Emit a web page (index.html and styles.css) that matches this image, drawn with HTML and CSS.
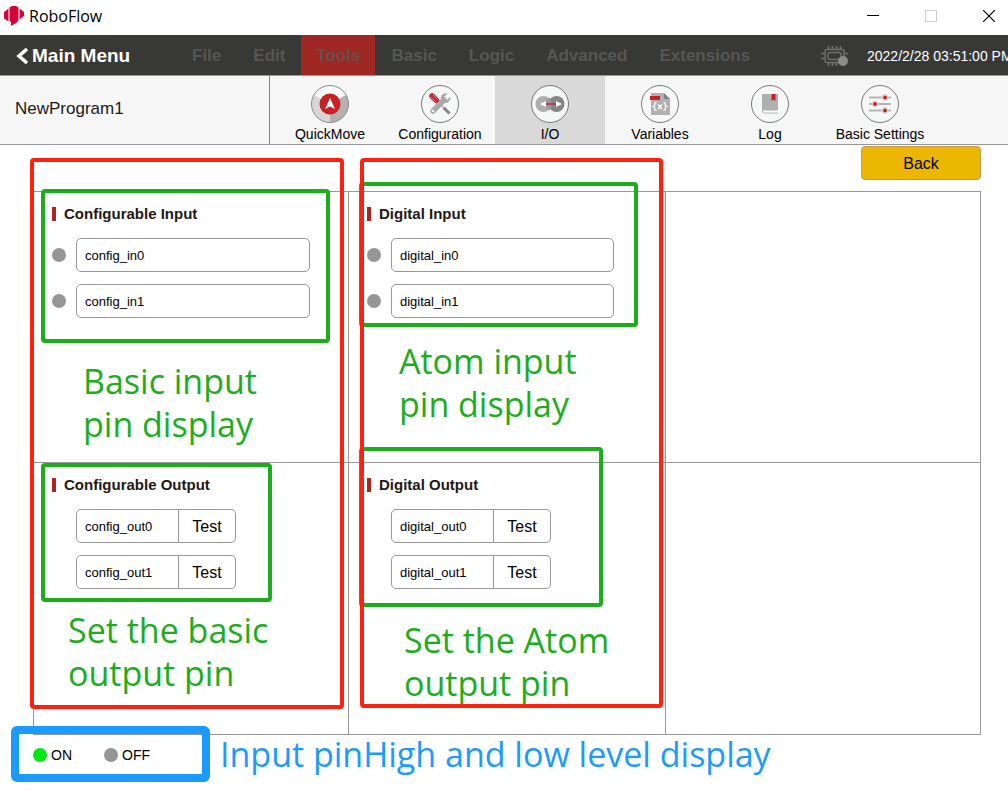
FILE: index.html
```html
<!DOCTYPE html>
<html lang="en">
<head>
<meta charset="utf-8">
<title>RoboFlow</title>
<link rel="stylesheet" href="styles.css">
</head>
<body>
<div class="app">
  <header class="titlebar">
    <svg class="logo" width="20" height="20" viewBox="0 0 20 20" fill="#d0063a">
      <path d="M0 6 L4.500 2.500 V15.500 L0 12.500Z"/>
      <path d="M5.500 1.500 L8 0 H12 L14.500 1.500 V14.500 L12 17 L7 20 V16 L5.500 14.500Z"/>
      <path d="M15.500 2.500 L20 6 V10 L15.500 13.500Z"/>
    </svg>
    <span class="app-name">RoboFlow</span>
    <div class="window-controls">
      <button class="win-btn" aria-label="Minimize"><svg width="12" height="12" viewBox="0 0 12 12"><path d="M0 5.500H12" stroke="#000"/></svg></button>
      <button class="win-btn" aria-label="Maximize" disabled><svg width="12" height="12" viewBox="0 0 12 12"><rect x=".5" y=".5" width="11" height="11" fill="none" stroke="#ccc"/></svg></button>
      <button class="win-btn" aria-label="Close"><svg width="12" height="12" viewBox="0 0 12 12"><path d="M0 0L12 12M12 0L0 12" stroke="#000" stroke-width="1.200"/></svg></button>
    </div>
  </header>

  <nav class="menubar">
    <button class="main-menu">
      <svg width="13" height="16" viewBox="0 0 13 16"><path d="M11 1L3 8L11 15" fill="none" stroke="#fff" stroke-width="3.500"/></svg>
      <span>Main Menu</span>
    </button>
    <div class="menus">
      <button class="menu" disabled>File</button>
      <button class="menu" disabled>Edit</button>
      <button class="menu active" disabled>Tools</button>
      <button class="menu" disabled>Basic</button>
      <button class="menu" disabled>Logic</button>
      <button class="menu" disabled>Advanced</button>
      <button class="menu" disabled>Extensions</button>
    </div>
    <div class="status">
      <svg width="28" height="20" viewBox="0 0 28 20" fill="none" stroke="#6e6e6c">
        <rect x="4" y="3.500" width="19" height="13" rx="2" stroke-width="1.500"/>
        <rect x="7" y="6.500" width="13" height="7" rx="2" stroke-width="1.500"/>
        <path d="M7.500 0V3M11.500 0V3M15.500 0V3M19.500 0V3M7.500 17V20M11.500 17V20M15.500 17V20M0 7.500H3.500M0 12.500H3.500M23.500 7.500H27" stroke-width="1.700"/>
        <circle cx="22" cy="15" r="5" fill="#8b8b89" stroke="none"/>
      </svg>
      <time>2022/2/28 03:51:00 PM</time>
    </div>
  </nav>

  <div class="toolbar">
    <div class="program">NewProgram1</div>
    <div class="tools">
      <button class="tool">
        <svg width="38" height="38" viewBox="0 0 38 38">
          <circle cx="19" cy="19" r="18.500" fill="#f6f8f7"/>
          <path d="M19 19L3 10A18.500 18.500 0 0 0 19 37.500Z" fill="#d7d7d7"/>
          <path d="M19 19L35 10A18.500 18.500 0 0 1 19 37.500Z" fill="#b2b2b2"/>
          <circle cx="19" cy="19" r="18.500" fill="none" stroke="#888"/>
          <circle cx="19" cy="19" r="10.500" fill="#c92024"/>
          <path d="M19 13L24 24L19 21.500L14 24Z" fill="#fff"/>
        </svg>
        <span>QuickMove</span>
      </button>
      <button class="tool">
        <svg width="38" height="38" viewBox="0 0 38 38">
          <circle cx="19" cy="19" r="18.500" fill="#f6f8f7" stroke="#777"/>
          <path d="M11 11L15.500 15.500" stroke="#c92432" stroke-width="5.500" stroke-linecap="round"/>
          <path d="M10 12L14.500 16.500M12 10L16.500 14.500" stroke="#e6a4a8" stroke-width=".7"/>
          <path d="M17 17L22 22" stroke="#aaa" stroke-width="1.500"/>
          <path d="M22.500 22.500L28.500 28.500" stroke="#858585" stroke-width="3"/>
          <path d="M12 26L23 15" stroke="#aaa" stroke-width="5.500" stroke-linecap="round"/>
          <path d="M26.500 8.500C21 7.500 18.500 12 20.500 16C23.500 20 30 18 29.500 11.500L26 15L23 12Z" fill="#aaa"/>
          <circle cx="12" cy="26" r="1.300" fill="#f6f8f7"/>
        </svg>
        <span>Configuration</span>
      </button>
      <button class="tool selected">
        <svg width="38" height="38" viewBox="0 0 38 38">
          <circle cx="19" cy="19" r="18.500" fill="#f6f8f7" stroke="#777"/>
          <circle cx="25.500" cy="19" r="8" fill="#858585"/>
          <circle cx="12.500" cy="19" r="8" fill="#aeaeae"/>
          <path d="M18 12.500A8 8 0 0 1 20.500 19A8 8 0 0 1 18 25.500A8 8 0 0 1 18 12.500" fill="#989898"/>
          <path d="M14 19H25" stroke="#b64050" stroke-width="2"/>
          <path d="M9 19L15 16V22ZM31 19L25 16V22Z" fill="#fff"/>
        </svg>
        <span>I/O</span>
      </button>
      <button class="tool">
        <svg width="38" height="38" viewBox="0 0 38 38">
          <circle cx="19" cy="19" r="18.500" fill="#f6f8f7" stroke="#777"/>
          <path d="M10 8H23L29 14V30H10Z" fill="#b0b0b0"/>
          <path d="M23 8L29 14H23Z" fill="#858585"/>
          <rect x="9" y="11" width="10" height="4" fill="#c92024"/>
          <path d="M15.500 17.500C12 17.500 15.500 20.500 12.500 21.500C15.500 22.500 12 25.500 15.500 25.500M22.500 17.500C26 17.500 22.500 20.500 25.500 21.500C22.500 22.500 26 25.500 22.500 25.500M17 19.500L21 24M21 19.500L17 24" fill="none" stroke="#fff" stroke-width="1.300"/>
        </svg>
        <span>Variables</span>
      </button>
      <button class="tool">
        <svg width="38" height="38" viewBox="0 0 38 38">
          <circle cx="19" cy="19" r="18.500" fill="#f6f8f7" stroke="#777"/>
          <path d="M11 9H27V25H11Z" fill="#b0b0b0"/>
          <path d="M11 24.500H27V28.500H13Q11 28.500 11 26.500Z" fill="#b0b0b0"/>
          <rect x="12" y="25.500" width="15" height="2" fill="#fff"/>
          <path d="M20.500 9H24.500V16L22.500 14.500L20.500 16Z" fill="#c92024"/>
        </svg>
        <span>Log</span>
      </button>
      <button class="tool">
        <svg width="38" height="38" viewBox="0 0 38 38">
          <circle cx="19" cy="19" r="18.500" fill="#f6f8f7" stroke="#777"/>
          <path d="M8 12.500H30M8 19H30M8 25.500H30" stroke="#b4b4b4" stroke-width="2"/>
          <g fill="#c92024" stroke="#dedede" stroke-width="1.500"><circle cx="24" cy="12.500" r="2.700"/><circle cx="14" cy="19" r="2.700"/><circle cx="24" cy="25.500" r="2.700"/></g>
        </svg>
        <span>Basic Settings</span>
      </button>
    </div>
  </div>

  <main class="content">
    <button class="back">Back</button>
    <div class="panels">
      <section class="panel">
        <h2>Configurable Input</h2>
        <div class="row"><i class="dot"></i><input class="field" aria-label="Configurable input 0" value="config_in0"></div>
        <div class="row"><i class="dot"></i><input class="field" aria-label="Configurable input 1" value="config_in1"></div>
      </section>
      <section class="panel digital">
        <h2>Digital Input</h2>
        <div class="row"><i class="dot"></i><input class="field" aria-label="Digital input 0" value="digital_in0"></div>
        <div class="row"><i class="dot"></i><input class="field" aria-label="Digital input 1" value="digital_in1"></div>
      </section>
      <section class="panel"></section>
      <section class="panel">
        <h2>Configurable Output</h2>
        <div class="row output"><input class="field" aria-label="Configurable output 0" value="config_out0"><button class="test">Test</button></div>
        <div class="row output"><input class="field" aria-label="Configurable output 1" value="config_out1"><button class="test">Test</button></div>
      </section>
      <section class="panel digital">
        <h2>Digital Output</h2>
        <div class="row output"><input class="field" aria-label="Digital output 0" value="digital_out0"><button class="test">Test</button></div>
        <div class="row output"><input class="field" aria-label="Digital output 1" value="digital_out1"><button class="test">Test</button></div>
      </section>
      <section class="panel"></section>
    </div>
  </main>

  <footer class="legend">
    <span class="state"><i class="dot on"></i>ON</span>
    <span class="state"><i class="dot"></i>OFF</span>
  </footer>

  <div class="notes">
    <div class="frame green config-in"></div>
    <div class="frame green digital-in"></div>
    <div class="frame green config-out"></div>
    <div class="frame green digital-out"></div>
    <p class="note note-basic-in">Basic input<br>pin display</p>
    <p class="note note-atom-in">Atom input<br>pin display</p>
    <p class="note note-basic-out">Set the basic<br>output pin</p>
    <p class="note note-atom-out">Set the Atom<br>output pin</p>
    <div class="frame red basic"></div>
    <div class="frame red atom"></div>
    <div class="frame blue"></div>
    <p class="note note-level">Input pinHigh and low level display</p>
  </div>
</div>
</body>
</html>
```
FILE: styles.css
```css
* { box-sizing: border-box; }

body {
  margin: 0;
  background: #fff;
  color: #000;
  font-family: "Liberation Sans", Arial, sans-serif;
  font-size: 14px;
}

button {
  padding: 0;
  border: 0;
  background: none;
  color: inherit;
  font: inherit;
}

svg { display: block; flex: none; }

.app {
  position: relative;
  display: flex;
  flex-direction: column;
  min-height: 100vh;
  overflow: hidden;
}

/* Window title */
.titlebar {
  display: flex;
  align-items: center;
  gap: 5px;
  height: 35px;
  padding: 0 13px 3px 4px;
}
.app-name { font: 16px "Open Sans", sans-serif; }
.window-controls { display: flex; gap: 46px; margin-left: auto; }

/* Menu bar */
.menubar {
  display: flex;
  align-items: stretch;
  height: 40px;
  background: #383836;
  white-space: nowrap;
}
.main-menu {
  display: flex;
  align-items: center;
  gap: 3px;
  width: 176px;
  padding: 2px 0 0 16px;
  color: #fff;
  font-size: 19px;
  font-weight: bold;
}
.menus { display: flex; flex: none; }
.menu {
  padding: 2px 16px 0;
  color: #565654;
  font-size: 17px;
  font-weight: bold;
}
.menu.active { padding: 2px 15px 0; background: #9f2724; color: #62504c; }
.status {
  display: flex;
  align-items: center;
  flex: none;
  gap: 18px;
  width: 187px;
  margin-left: auto;
  padding-top: 2px;
  color: #fff;
}

/* Tool bar */
.toolbar {
  display: flex;
  height: 70px;
  border-top: 1px solid #989898;
  border-bottom: 1px solid #989898;
  background: #f6f6f6;
}
.program {
  display: flex;
  align-items: center;
  flex: none;
  width: 270px;
  padding: 0 0 2px 15px;
  border-right: 1px solid #888;
  color: #231815;
  font-size: 17px;
}
.tools { display: flex; padding-left: 5px; }
.tool {
  display: flex;
  flex-direction: column;
  align-items: center;
  gap: 3px;
  width: 110px;
  padding-top: 9px;
}
.tool.selected { background: #d9d9d9; }

/* Signal panels */
.content {
  display: flex;
  flex-direction: column;
  flex: 1;
  padding: 1px 27px 0 33px;
}
.back {
  align-self: flex-end;
  width: 120px;
  height: 34px;
  margin-bottom: 11px;
  padding-top: 2px;
  border: 1px solid #c69a5c;
  border-radius: 4px;
  background: #ebb700;
  font-size: 16px;
}
.panels {
  display: grid;
  grid-template-columns: 315fr 317fr 314fr;
  grid-template-rows: 1fr 1fr;
  flex: 1;
  border: 1px solid #989898;
}
.panel {
  display: flex;
  flex-direction: column;
  gap: 12px;
  padding: 15px 38px 15px 18px;
  border-right: 1px solid #989898;
}
.panel.digital { padding-right: 51px; }
.panel:nth-child(3n) { border-right: 0; }
.panel:nth-child(-n+3) { border-bottom: 1px solid #989898; }
.panel h2 {
  margin: 0 0 5px;
  padding-left: 8px;
  border-left: 4px solid #b02224;
  color: #231815;
  font-size: 15px;
  line-height: 14px;
}
.row { display: flex; align-items: center; gap: 10px; }
.row.output { gap: 0; padding-left: 24px; }
.dot {
  flex: none;
  width: 14px;
  height: 14px;
  border-radius: 50%;
  background: #969696;
}
.dot.on { background: #00e813; }
.field {
  flex: 1;
  min-width: 0;
  height: 34px;
  padding: 0 8px;
  border: 1px solid #989898;
  border-radius: 5px;
  background: #fff;
  color: #000;
  font: 13px "Liberation Sans", Arial, sans-serif;
}
.output .field {
  flex: none;
  width: 103px;
  border-radius: 5px 0 0 5px;
}
.test {
  width: 57px;
  height: 34px;
  padding-top: 2px;
  border: 1px solid #989898;
  border-left: 0;
  border-radius: 0 5px 5px 0;
  background: #fff;
  font-size: 16px;
}

/* Level legend */
.legend {
  display: flex;
  gap: 32px;
  height: 62px;
  padding: 13px 33px 0;
  line-height: 14px;
}
.state { display: flex; align-items: center; gap: 4px; height: 14px; }

/* Callouts drawn over the window */
.notes { position: absolute; inset: 0; pointer-events: none; }
.frame { position: absolute; border: 4px solid; border-radius: 4px; }
.green { border-color: #1cad1c; }
.red { border-color: #ff2010; }
.blue { left: 11px; top: 726px; width: 199px; height: 56px; border: 8px solid #1b9aff; border-radius: 6px; }
.config-in { left: 41px; top: 189px; width: 289px; height: 154px; }
.digital-in { left: 359px; top: 182px; width: 279px; height: 145px; }
.config-out { left: 41px; top: 463px; width: 231px; height: 139px; }
.digital-out { left: 359px; top: 447px; width: 244px; height: 160px; }
.basic { left: 30px; top: 158px; width: 314px; height: 551px; }
.atom { left: 360px; top: 158px; width: 303px; height: 550px; }
.note {
  position: absolute;
  margin: 0;
  color: #1cad1c;
  font: 34px/43px "Open Sans", sans-serif;
  white-space: nowrap;
}
.note-basic-in { left: 83px; top: 360px; }
.note-atom-in { left: 399px; top: 340px; }
.note-basic-out { left: 68px; top: 609px; }
.note-atom-out { left: 404px; top: 619px; }
.note-level { left: 220px; top: 733px; color: #1b9aff; }
```
